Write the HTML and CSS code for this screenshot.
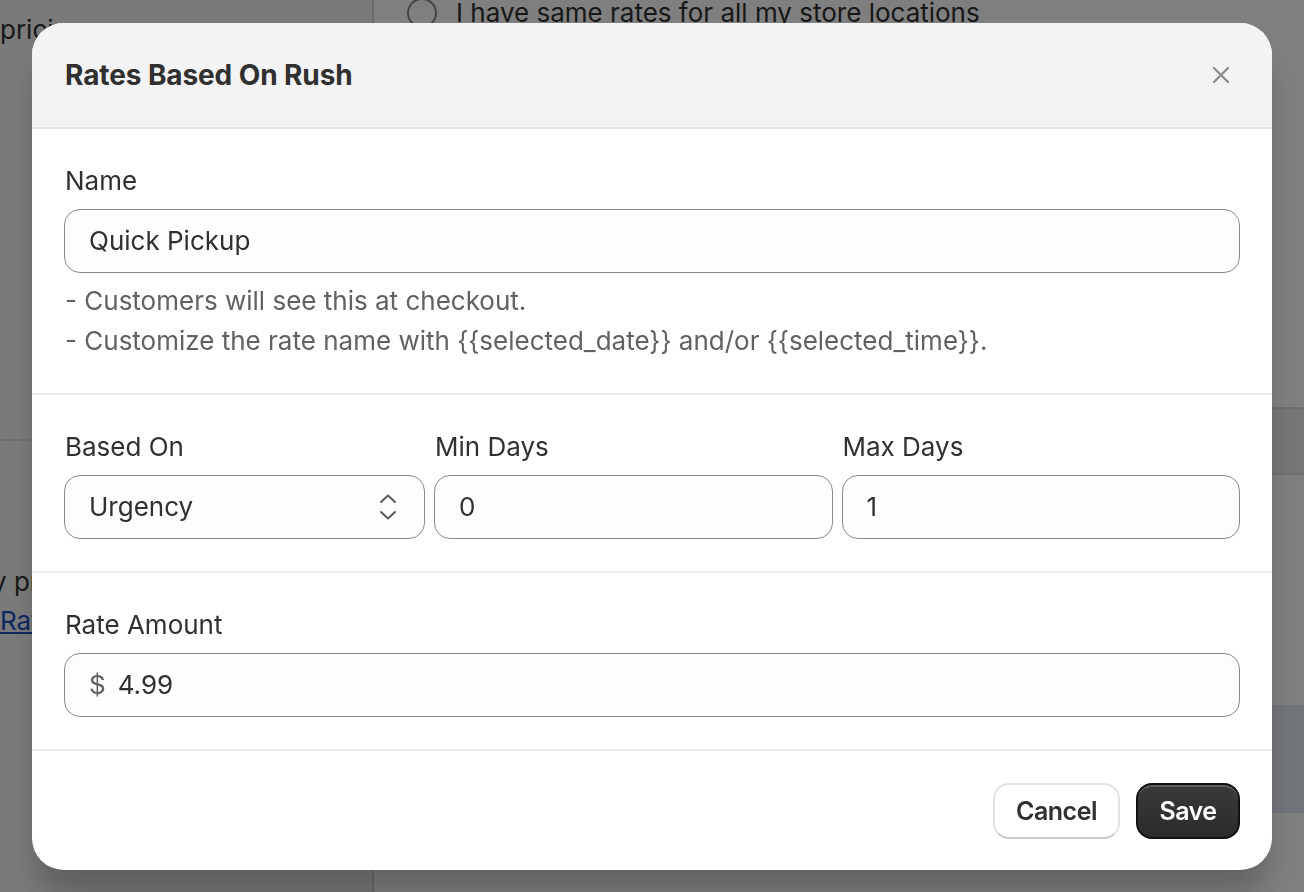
FILE: index.html
```html
<!DOCTYPE html>
<html lang="en">
<head>
<meta charset="utf-8">
<title>Rates Based On Rush</title>
<link rel="stylesheet" href="styles.css">
</head>
<body>
<div class="page">
  <aside class="sidebar">
    <p class="side-text">pricing</p>
    <div class="side-rule"></div>
    <p class="side-text side-low">y pricing</p>
    <a class="side-link" href="#">Rates</a>
  </aside>
  <main class="main">
    <label class="radio-row"><span class="radio"></span><span>I have same rates for all my store locations</span></label>
    <div class="table-head"></div>
    <div class="banner"></div>
  </main>
</div>

<div class="overlay">
  <div class="modal" role="dialog" aria-labelledby="modal-title">
    <header class="modal-header">
      <h2 id="modal-title" class="modal-title">Rates Based On Rush</h2>
      <button class="close-btn" aria-label="Close">
        <svg viewBox="0 0 20 20" width="20" height="20"><path d="M3 3 L17 17 M17 3 L3 17" stroke="#8a8a8a" stroke-width="2.2" stroke-linecap="round" fill="none"/></svg>
      </button>
    </header>

    <section class="modal-section">
      <div class="field">
        <div class="label">Name</div>
        <div class="input"><span class="value">Quick Pickup</span></div>
      </div>
      <div class="help">
        <div>- Customers will see this at checkout.</div>
        <div>- Customize the rate name with {{selected_date}} and/or {{selected_time}}.</div>
      </div>
    </section>

    <section class="modal-section">
      <div class="field-group">
        <div class="field">
          <div class="label">Based On</div>
          <div class="input select">
            <span class="value">Urgency</span>
            <svg class="chev" viewBox="0 0 20 28" width="20" height="28"><path d="M3 9 L10 2.5 L17 9 M3 19 L10 25.5 L17 19" stroke="#5c5c5c" stroke-width="2" stroke-linecap="round" stroke-linejoin="round" fill="none"/></svg>
          </div>
        </div>
        <div class="field">
          <div class="label">Min Days</div>
          <div class="input"><span class="value">0</span></div>
        </div>
        <div class="field">
          <div class="label">Max Days</div>
          <div class="input"><span class="value">1</span></div>
        </div>
      </div>
    </section>

    <section class="modal-section">
      <div class="field">
        <div class="label">Rate Amount</div>
        <div class="input"><span class="prefix">$</span><span class="value">4.99</span></div>
      </div>
    </section>

    <footer class="modal-footer">
      <button class="btn btn-secondary">Cancel</button>
      <button class="btn btn-primary">Save</button>
    </footer>
  </div>
</div>
</body>
</html>
```

FILE: styles.css
```css
* { box-sizing: border-box; }

html, body {
  margin: 0;
  height: 100%;
  overflow: hidden;
}

body {
  font-family: Inter, "Noto Sans", sans-serif;
  font-size: 26px;
  line-height: 40px;
  color: #303030;
  background: #ffffff;
}

/* Background page */
.page {
  display: grid;
  grid-template-columns: 374px 1fr;
  height: 100%;
}

.sidebar {
  background: #f4f4f4;
  border-right: 2px solid #d6d6d6;
  display: flex;
  flex-direction: column;
}

.side-text {
  margin: 10px 0 0;
  color: #303030;
}

.side-rule {
  margin-top: 389px;
  border-top: 2px solid #e1e1e1;
}

.side-low {
  margin: 121px 0 0 -8px;
}

.side-link {
  color: #1f4fbf;
  text-decoration: underline;
  line-height: 40px;
  margin-top: -1px;
}

.main {
  display: flex;
  flex-direction: column;
}

.radio-row {
  display: flex;
  align-items: center;
  gap: 19px;
  margin: -7px 0 0 33px;
  color: #303030;
}

.radio {
  width: 30px;
  height: 30px;
  border: 2px solid #8a8a8a;
  border-radius: 50%;
  background: #fff;
}

.table-head {
  margin-top: 374px;
  height: 68px;
  background: #ececec;
  border-top: 2px solid #dedede;
  border-bottom: 2px solid #dedede;
}

.banner {
  margin-top: 230px;
  height: 108px;
  background: #e3e8f2;
}

/* Overlay & modal */
.overlay {
  position: fixed;
  inset: 0;
  background: rgba(0, 0, 0, 0.5);
  display: flex;
  align-items: center;
  justify-content: center;
}

.modal {
  width: 1240px;
  background: #ffffff;
  border-radius: 32px;
  overflow: hidden;
  box-shadow: 0 30px 30px -6px rgba(0, 0, 0, 0.22);
}

.modal-header {
  display: flex;
  align-items: center;
  justify-content: space-between;
  background: #f3f3f3;
  padding: 32px 32px 32px 33px;
  border-bottom: 2px solid #e3e3e3;
}

.modal-title {
  margin: 0;
  font-size: 28px;
  line-height: 40px;
  font-weight: 650;
  color: #303030;
  letter-spacing: -0.1px;
}

.close-btn {
  border: 0;
  background: none;
  padding: 0;
  margin-right: 9px;
  width: 20px;
  height: 20px;
  display: flex;
}

.modal-section {
  padding: 32px;
  border-bottom: 2px solid #ebebeb;
}

.field {
  display: flex;
  flex-direction: column;
  gap: 8px;
  min-width: 0;
}

.label {
  padding-left: 1px;
  color: #303030;
}

.input {
  display: flex;
  align-items: center;
  height: 64px;
  padding: 0 24px;
  background: #fdfdfd;
  border: 1.5px solid #8a8a8a;
  border-radius: 16px;
  color: #303030;
}

.value {
  white-space: nowrap;
}

.prefix {
  color: #616161;
  margin-right: 12px;
}

.select {
  justify-content: space-between;
  padding-right: 26px;
}

.chev {
  display: block;
}

.field-group {
  display: grid;
  grid-template-columns: 361px 1fr 1fr;
  gap: 9px;
}

.help {
  color: #616161;
  margin-top: 8px;
  padding-left: 1px;
}

.modal-footer {
  display: flex;
  justify-content: flex-end;
  gap: 16px;
  padding: 32px 32px 31px;
}

.btn {
  font-family: inherit;
  font-size: 25px;
  font-weight: 600;
  height: 56px;
  border-radius: 16px;
  padding: 0;
  cursor: pointer;
  letter-spacing: -0.5px;
}

.btn-secondary {
  background: #ffffff;
  color: #303030;
  border: 2px solid #e3e3e3;
  border-bottom-color: #c9c9c9;
  width: 127px;
}

.btn-primary {
  background: linear-gradient(#3a3a3a, #2b2b2b);
  color: #ffffff;
  border: 2px solid #111111;
  box-shadow: inset 0 2px 0 rgba(255, 255, 255, 0.18);
  width: 104px;
}
```
